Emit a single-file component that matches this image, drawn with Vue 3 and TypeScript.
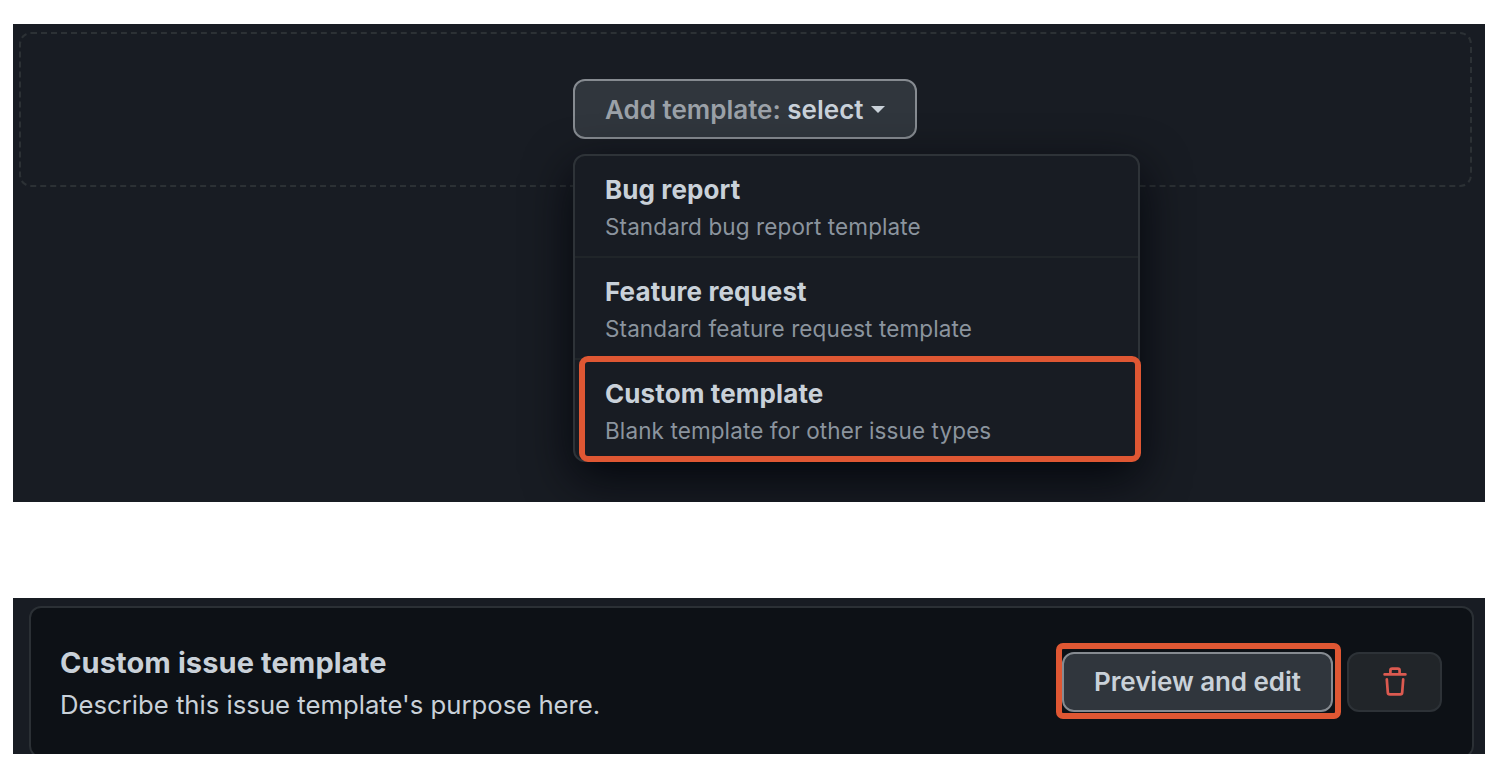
<script setup lang="ts">
interface TemplateOption {
  title: string
  description: string
  highlighted: boolean
}

const options: TemplateOption[] = [
  { title: 'Bug report', description: 'Standard bug report template', highlighted: false },
  { title: 'Feature request', description: 'Standard feature request template', highlighted: false },
  { title: 'Custom template', description: 'Blank template for other issue types', highlighted: true },
]
</script>

<template>
  <main class="page">
    <section class="panel picker-panel">
      <div class="dropzone">
        <div class="picker">
          <button class="btn select-btn" type="button">
            <span><span class="muted">Add template:</span> select</span><i class="caret"></i>
          </button>
          <ul class="menu">
            <li v-for="o in options" :key="o.title" class="option" :class="{ marked: o.highlighted }">
              <strong class="option-title">{{ o.title }}</strong>
              <span class="option-text">{{ o.description }}</span>
            </li>
          </ul>
        </div>
      </div>
    </section>
    <section class="panel card-panel">
      <article class="card">
        <div class="card-copy">
          <h3 class="card-title">Custom issue template</h3>
          <p class="card-text">Describe this issue template's purpose here.</p>
        </div>
        <div class="preview-mark">
          <button class="btn preview-btn" type="button">Preview and edit</button>
        </div>
        <button class="trash-btn" type="button" aria-label="Delete template">
          <svg class="trash" viewBox="0 0 24 30" fill="none" stroke="#dc5a50" stroke-width="2.7" stroke-linecap="round">
            <path d="M1.6 7.4H22.4M7.4 7V3.4Q7.4 1.6 9.2 1.6H14.8Q16.6 1.6 16.6 3.4V7M3.8 12.3L4.8 25.4Q4.9 27.3 6.8 27.3H17.2Q19.1 27.3 19.2 25.4L20.2 12.3" />
          </svg>
        </button>
      </article>
    </section>
  </main>
</template>

<style>
body {
  margin: 0;
  background: #fff;
}
</style>

<style scoped>
.page {
  box-sizing: border-box;
  width: 1494px;
  height: 772px;
  padding: 24px 9px 0 13px;
  overflow: hidden;
  font-family: Inter, "Liberation Sans", sans-serif;
  color: #c9d1d9;
}
.page *,
.page *::before {
  box-sizing: border-box;
}
.panel {
  width: 1472px;
  overflow: hidden;
  background: #181c23;
}
.picker-panel {
  height: 478px;
  padding: 8px 13px 0 6px;
}
.dropzone {
  height: 155px;
  padding: 45px 0 0 552px;
  border: 2px dashed #2c3135;
  border-radius: 12px;
}
.picker {
  position: relative;
  width: 344px;
}
.btn {
  display: flex;
  align-items: center;
  height: 60px;
  margin: 0;
  border: 2px solid #868b91;
  border-radius: 12px;
  background: #30363d;
  color: #c9d1d9;
  font-family: inherit;
  font-size: 26px;
  font-weight: 600;
  white-space: nowrap;
}
.select-btn {
  width: 344px;
  padding: 0 30px;
}
.muted {
  color: #9ba1a8;
}
.caret {
  margin-left: 7px;
  border: 7.5px solid transparent;
  border-top-color: #c9d1d9;
  border-bottom: 0;
}
.menu {
  position: absolute;
  top: 75px;
  left: 0;
  width: 567px;
  height: 308px;
  margin: 0;
  padding: 0;
  list-style: none;
  background: #181c23;
  border: 2px solid #2e3338;
  border-radius: 12px;
  box-shadow: 0 16px 48px rgba(1, 4, 9, 0.85);
}
.option {
  position: relative;
  height: 102px;
  padding: 16px 30px 0;
  white-space: nowrap;
}
.option:first-child {
  height: 100px;
}
.option + .option {
  border-top: 2px solid #202529;
}
.option.marked::before {
  content: "";
  position: absolute;
  top: -4px;
  left: 4px;
  width: 562px;
  height: 106px;
  border: 6px solid #df5733;
  border-radius: 9px;
}
.option-title {
  display: block;
  font-size: 26px;
  line-height: 36px;
  font-weight: 700;
  letter-spacing: 0.1px;
}
.option-text {
  display: block;
  margin-top: 2px;
  font-size: 22.5px;
  line-height: 34px;
  letter-spacing: 0.11px;
  color: #8b949e;
}
.card-panel {
  height: 156px;
  margin-top: 96px;
  padding: 8px 11px 0 16px;
}
.card {
  display: flex;
  align-items: flex-start;
  height: 152px;
  padding: 35px 30px 0 29px;
  border: 2px solid #2b3035;
  border-radius: 12px;
  background: #0d1116;
}
.card-copy {
  flex: 1;
  white-space: nowrap;
}
.card-title {
  margin: 0;
  font-size: 29px;
  line-height: 40px;
  font-weight: 700;
  letter-spacing: 0.1px;
}
.card-text {
  margin: 2px 0 0;
  font-size: 25.7px;
  line-height: 40px;
}
.preview-mark {
  width: 285px;
  height: 76px;
  padding: 3px 0 0;
  border: 6px solid #df5733;
  border-radius: 7px;
}
.preview-btn {
  width: 271px;
  padding: 0 30px 2px;
  letter-spacing: -0.08px;
}
.trash-btn {
  display: flex;
  align-items: center;
  justify-content: center;
  width: 95px;
  height: 60px;
  margin: 9px 0 0 6px;
  padding: 0 0 1px;
  border: 2px solid #2d3237;
  border-radius: 12px;
  background: #212529;
}
.trash {
  width: 24px;
  height: 30px;
}
</style>
